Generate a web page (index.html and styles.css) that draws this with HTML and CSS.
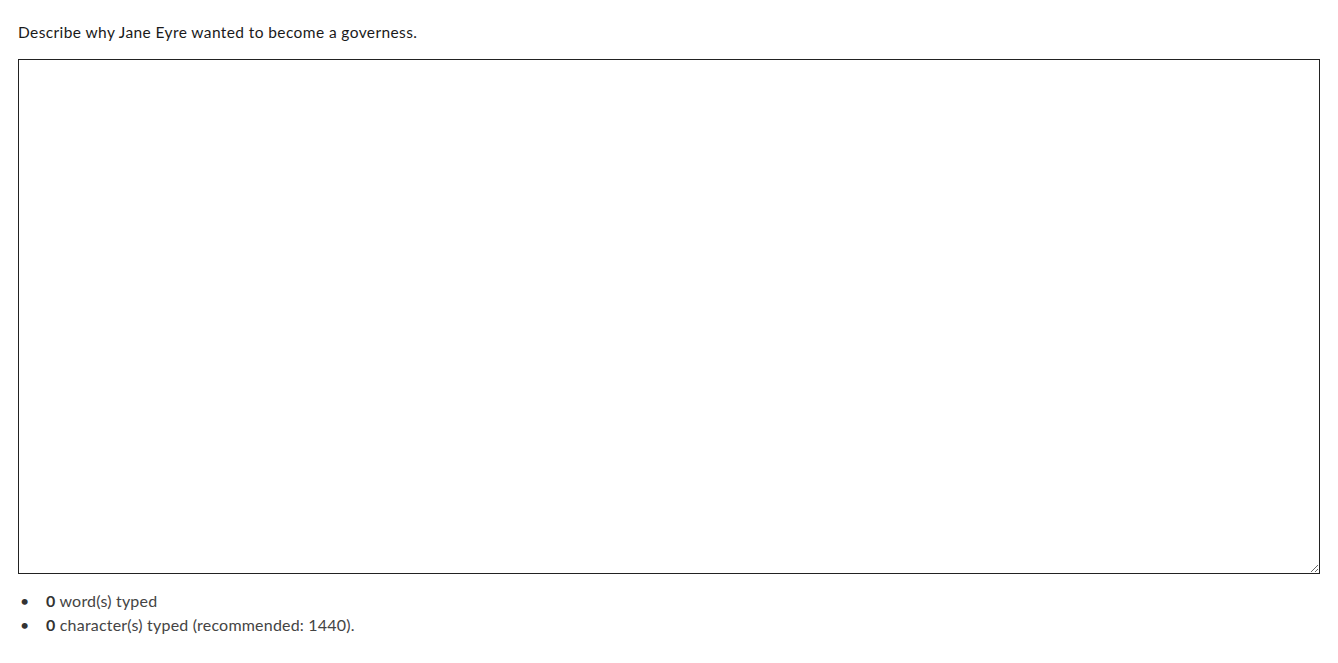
FILE: index.html
```
<!DOCTYPE html>
<html lang="en">
<head>
<meta charset="utf-8">
<title>Essay question</title>
<link rel="stylesheet" href="styles.css">
</head>
<body>
<div class="question">
  <p class="prompt">Describe why Jane Eyre wanted to become a governess.</p>
  <textarea class="answer" aria-label="Answer"></textarea>
  <ul class="counts">
    <li><strong>0</strong>&nbsp;word(s) typed</li>
    <li><strong>0</strong>&nbsp;character(s) typed (recommended: 1440).</li>
  </ul>
</div>
</body>
</html>
```
FILE: styles.css
```
html, body {
  margin: 0;
  padding: 0;
  background: #fff;
}
body {
  font-family: Lato, "Open Sans", sans-serif;
  color: #222;
}
.question {
  padding: 20px 18px 0 18px;
}
.prompt {
  margin: 0;
  font-size: 15.5px;
  letter-spacing: 0.4px;
  line-height: 24px;
  color: #1a1a1a;
}
.answer {
  display: block;
  box-sizing: border-box;
  width: 100%;
  height: 515px;
  margin: 15px 0 0 0;
  border: 1px solid #222;
  padding: 2px;
  font-family: inherit;
  font-size: 15px;
  background: #fff;
  resize: both;
}
.counts {
  margin: 15px 0 0 0;
  padding: 0;
  list-style: none;
  font-size: 16px;
  letter-spacing: 0.2px;
  line-height: 24px;
  color: #444;
}
.counts li {
  display: flex;
}
.counts li::before {
  content: "•";
  flex: 0 0 28px;
  padding-left: 2px;
  box-sizing: border-box;
  color: #333;
}
.counts strong {
  color: #333;
}
```
